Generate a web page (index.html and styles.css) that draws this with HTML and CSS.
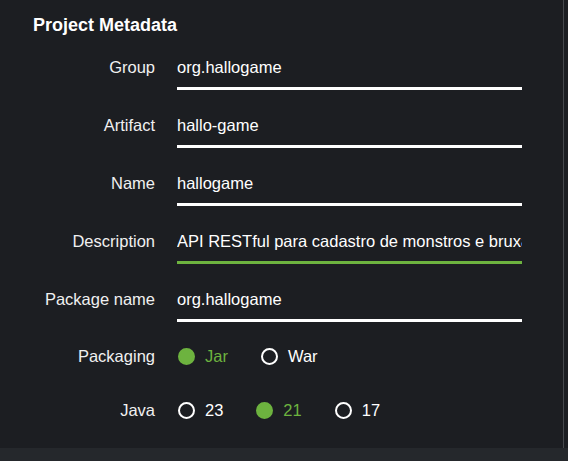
FILE: index.html
```html
<!DOCTYPE html>
<html lang="en">
<head>
<meta charset="utf-8">
<title>Project Metadata</title>
<link rel="stylesheet" href="styles.css">
</head>
<body>
<div class="page">
  <section class="panel">
    <h2 class="title">Project Metadata</h2>
    <div class="form">
      <div class="row text-row">
        <label class="label" for="group">Group</label>
        <input class="field" id="group" type="text" value="org.hallogame">
      </div>
      <div class="row text-row">
        <label class="label" for="artifact">Artifact</label>
        <input class="field" id="artifact" type="text" value="hallo-game">
      </div>
      <div class="row text-row">
        <label class="label" for="name">Name</label>
        <input class="field" id="name" type="text" value="hallogame">
      </div>
      <div class="row text-row">
        <label class="label" for="desc">Description</label>
        <input class="field field-focus" id="desc" type="text" value="API RESTful para cadastro de monstros e bruxas">
      </div>
      <div class="row text-row">
        <label class="label" for="pkg">Package name</label>
        <input class="field" id="pkg" type="text" value="org.hallogame">
      </div>
      <div class="row radio-row">
        <span class="label">Packaging</span>
        <div class="options">
          <span class="option checked"><span class="dot"></span>Jar</span>
          <span class="option"><span class="dot"></span>War</span>
        </div>
      </div>
      <div class="row radio-row">
        <span class="label">Java</span>
        <div class="options">
          <span class="option"><span class="dot"></span>23</span>
          <span class="option checked"><span class="dot"></span>21</span>
          <span class="option"><span class="dot"></span>17</span>
        </div>
      </div>
    </div>
  </section>
  <div class="strip"></div>
</div>
</body>
</html>
```
FILE: styles.css
```css
html, body {
  margin: 0;
  padding: 0;
  background: #1c1e22;
}
body {
  font-family: "Liberation Sans", Arial, sans-serif;
  color: #ffffff;
  width: 568px;
  height: 461px;
  overflow: hidden;
}
.page {
  display: flex;
  flex-direction: column;
  height: 461px;
}
.panel {
  width: 563px;
  height: 448px;
  box-sizing: border-box;
  border-right: 1px solid #46494d;
  width: 564px;
  padding: 13px 0 0 0;
}
.title {
  margin: 0 0 0 33px;
  font-size: 18px;
  font-weight: bold;
  line-height: 24px;
  height: 24px;
  color: #ffffff;
}
.form {
  display: flex;
  flex-direction: column;
  margin-top: 20px;
}
.row {
  display: flex;
  align-items: flex-start;
}
.text-row + .text-row {
  margin-top: 25px;
}
.radio-row {
  margin-top: 24px;
  align-items: center;
  height: 20px;
}
.radio-row + .radio-row {
  margin-top: 34px;
}
.label {
  width: 155px;
  margin-right: 22px;
  text-align: right;
  font-size: 16.5px;
  line-height: 20px;
  color: #f0f0f0;
  flex: none;
}
.field {
  display: block;
  width: 345px;
  height: 20px;
  padding: 0 0 10px 0;
  margin: 0;
  border: none;
  border-bottom: 3px solid #ffffff;
  background: transparent;
  color: #ffffff;
  font-family: "Liberation Sans", Arial, sans-serif;
  font-size: 16.5px;
  line-height: 20px;
  outline: none;
  box-sizing: content-box;
}
.field-focus {
  border-bottom-color: #6db33f;
}
.options {
  display: flex;
  align-items: center;
  margin-left: 1px;
}
.option {
  display: flex;
  align-items: center;
  font-size: 16.5px;
  line-height: 20px;
  color: #ffffff;
  margin-right: 33px;
}
.dot {
  width: 17px;
  height: 17px;
  box-sizing: border-box;
  border: 2px solid #ffffff;
  border-radius: 50%;
  margin-right: 10px;
  flex: none;
}
.option.checked {
  color: #6db33f;
}
.option.checked .dot {
  background: #6db33f;
  border-color: #6db33f;
}
.strip {
  flex: 1;
  background: #25282c;
}
```
